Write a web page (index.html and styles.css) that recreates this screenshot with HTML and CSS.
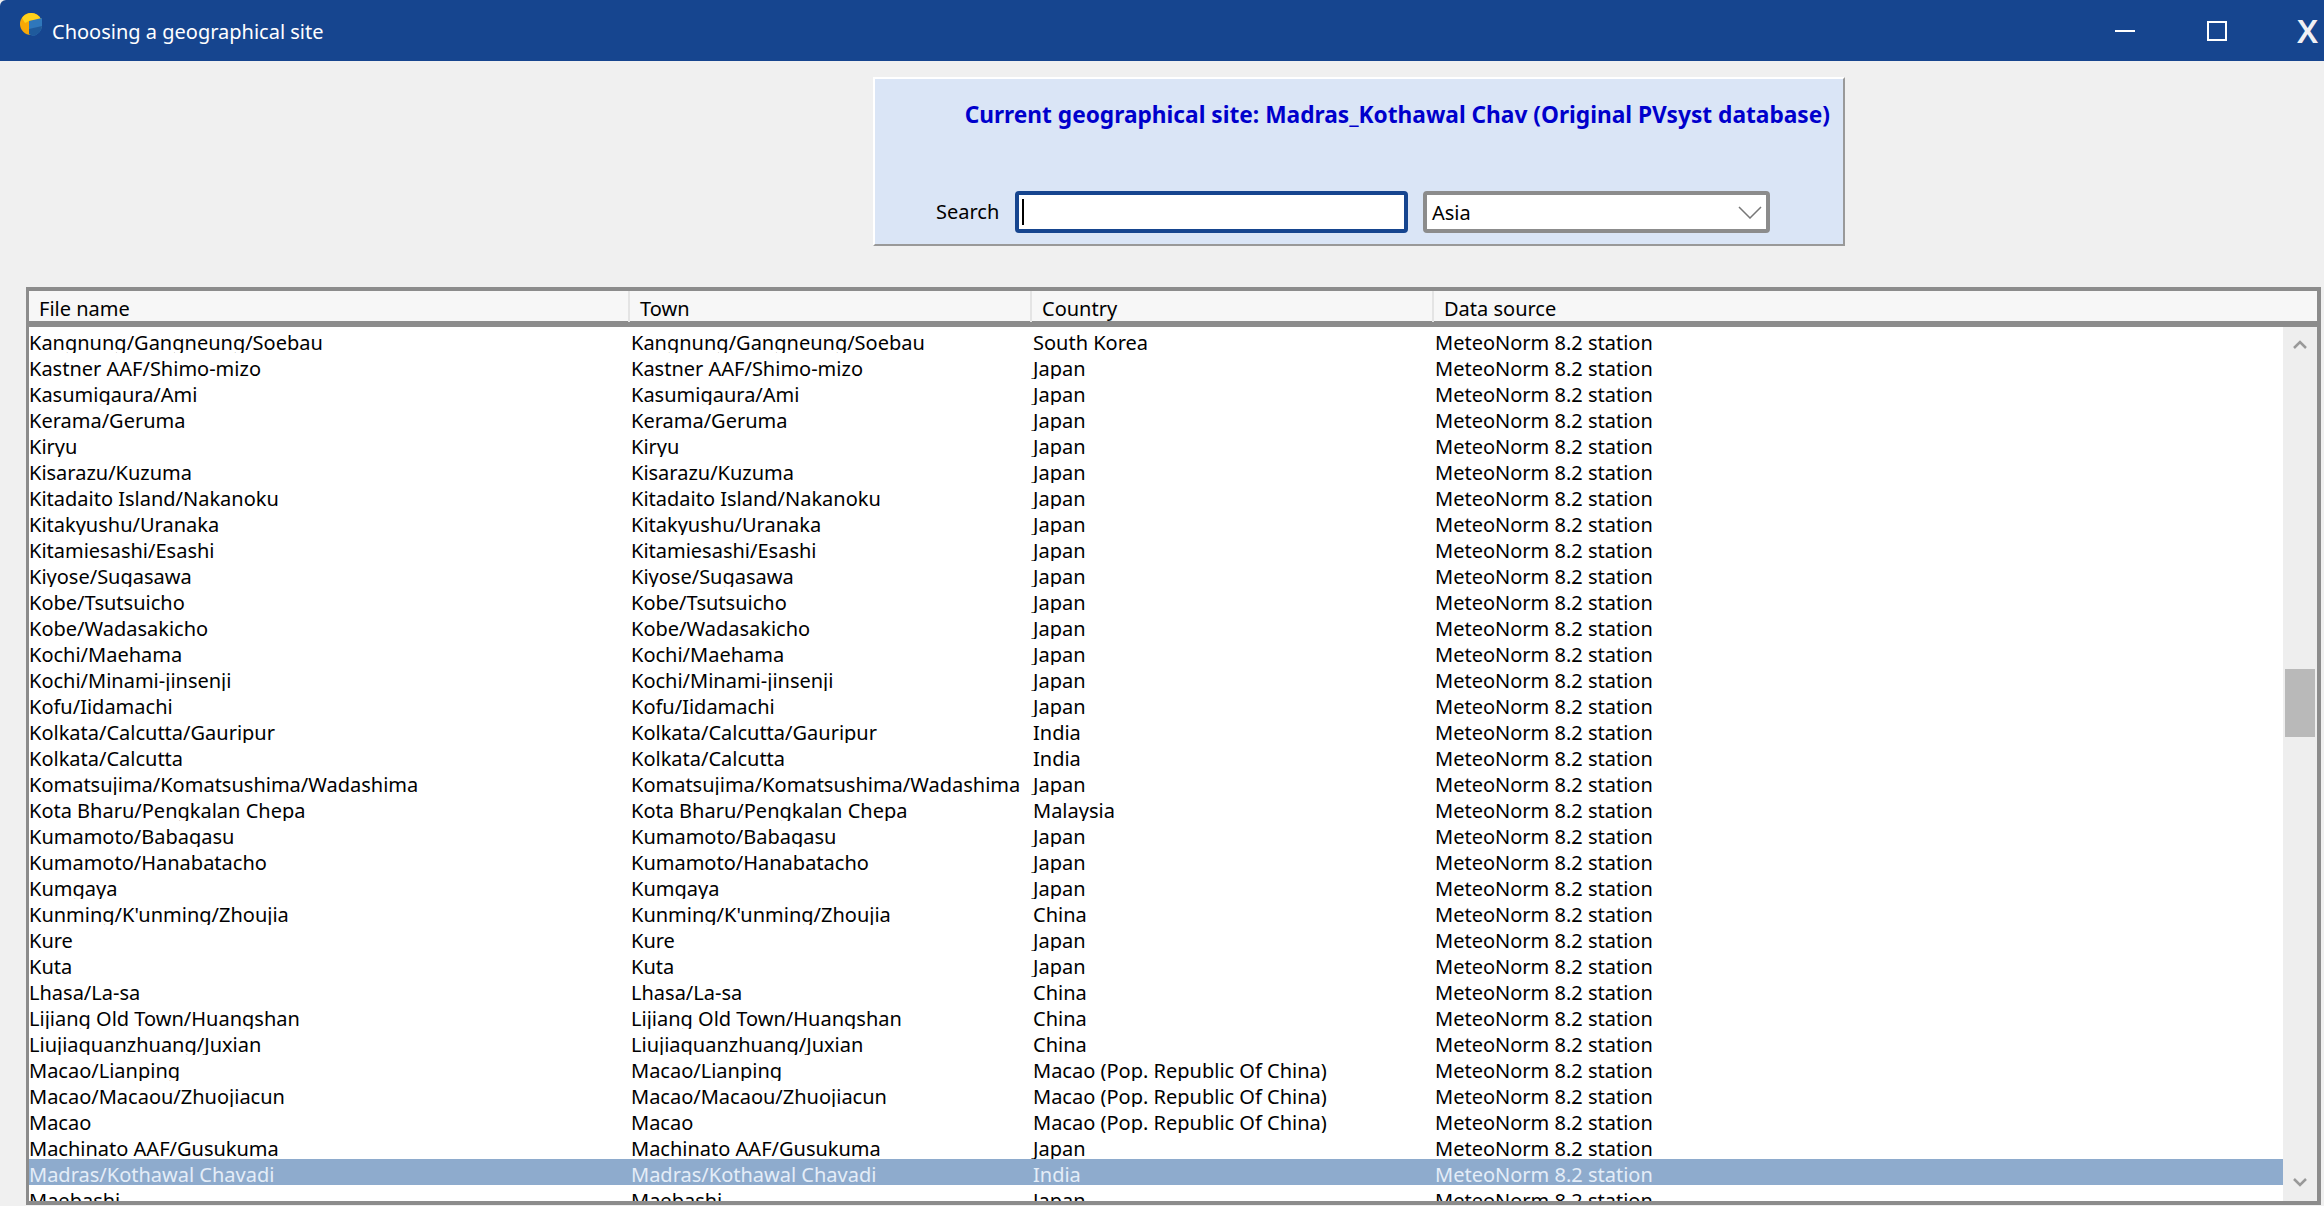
FILE: index.html
```html
<!DOCTYPE html>
<html>
<head>
    <title>Choosing a geographical site</title>
    <link rel="stylesheet" href="styles.css">
</head>
<body>
    <!-- window title bar -->
    <div class="titlebar">
        <svg class="app-icon" width="24" height="24" viewBox="0 0 24 24">
            <circle cx="12" cy="11" r="11" fill="#f8a806"/>
            <path d="M3 5a11 11 0 0 1 19 1l-12 2-4 2z" fill="#ffd21c"/>
            <path d="M10 8l13-3v8a11 11 0 0 1-9 10l-4-2z" fill="#2f77bb"/>
            <path d="M10 16l13-3a11 11 0 0 1-9 10l-4-2z" fill="#1f5a9c"/>
        </svg>
        <span class="title">Choosing a geographical site</span>
        <div class="controls">
            <span class="min"></span>
            <span class="max"></span>
            <span class="close">X</span>
        </div>
    </div>

    <div class="content">
        <!-- current site and search -->
        <div class="panel">
            <div class="current">Current geographical site: Madras_Kothawal Chav (Original PVsyst database)</div>
            <div class="search-row">
                <label class="search-label" for="search">Search</label>
                <div class="search-box" id="search"><span class="caret"></span></div>
                <div class="region">
                    <span>Asia</span>
                    <svg width="24" height="13" viewBox="0 0 24 13"><path d="M1 1l11 11L23 1" fill="none" stroke="#777" stroke-width="1.5"/></svg>
                </div>
            </div>
        </div>

        <!-- site list -->
        <div class="list">
            <div class="list-head">
                <div>File name</div>
                <div>Town</div>
                <div>Country</div>
                <div>Data source</div>
            </div>
            <div class="list-body">
                <div class="rows">
                    <div class="row"><span>Kangnung/Gangneung/Soebau</span><span>Kangnung/Gangneung/Soebau</span><span>South Korea</span><span>MeteoNorm 8.2 station</span></div>
                    <div class="row"><span>Kastner AAF/Shimo-mizo</span><span>Kastner AAF/Shimo-mizo</span><span>Japan</span><span>MeteoNorm 8.2 station</span></div>
                    <div class="row"><span>Kasumigaura/Ami</span><span>Kasumigaura/Ami</span><span>Japan</span><span>MeteoNorm 8.2 station</span></div>
                    <div class="row"><span>Kerama/Geruma</span><span>Kerama/Geruma</span><span>Japan</span><span>MeteoNorm 8.2 station</span></div>
                    <div class="row"><span>Kiryu</span><span>Kiryu</span><span>Japan</span><span>MeteoNorm 8.2 station</span></div>
                    <div class="row"><span>Kisarazu/Kuzuma</span><span>Kisarazu/Kuzuma</span><span>Japan</span><span>MeteoNorm 8.2 station</span></div>
                    <div class="row"><span>Kitadaito Island/Nakanoku</span><span>Kitadaito Island/Nakanoku</span><span>Japan</span><span>MeteoNorm 8.2 station</span></div>
                    <div class="row"><span>Kitakyushu/Uranaka</span><span>Kitakyushu/Uranaka</span><span>Japan</span><span>MeteoNorm 8.2 station</span></div>
                    <div class="row"><span>Kitamiesashi/Esashi</span><span>Kitamiesashi/Esashi</span><span>Japan</span><span>MeteoNorm 8.2 station</span></div>
                    <div class="row"><span>Kiyose/Sugasawa</span><span>Kiyose/Sugasawa</span><span>Japan</span><span>MeteoNorm 8.2 station</span></div>
                    <div class="row"><span>Kobe/Tsutsuicho</span><span>Kobe/Tsutsuicho</span><span>Japan</span><span>MeteoNorm 8.2 station</span></div>
                    <div class="row"><span>Kobe/Wadasakicho</span><span>Kobe/Wadasakicho</span><span>Japan</span><span>MeteoNorm 8.2 station</span></div>
                    <div class="row"><span>Kochi/Maehama</span><span>Kochi/Maehama</span><span>Japan</span><span>MeteoNorm 8.2 station</span></div>
                    <div class="row"><span>Kochi/Minami-jinsenji</span><span>Kochi/Minami-jinsenji</span><span>Japan</span><span>MeteoNorm 8.2 station</span></div>
                    <div class="row"><span>Kofu/Iidamachi</span><span>Kofu/Iidamachi</span><span>Japan</span><span>MeteoNorm 8.2 station</span></div>
                    <div class="row"><span>Kolkata/Calcutta/Gauripur</span><span>Kolkata/Calcutta/Gauripur</span><span>India</span><span>MeteoNorm 8.2 station</span></div>
                    <div class="row"><span>Kolkata/Calcutta</span><span>Kolkata/Calcutta</span><span>India</span><span>MeteoNorm 8.2 station</span></div>
                    <div class="row"><span>Komatsujima/Komatsushima/Wadashima</span><span>Komatsujima/Komatsushima/Wadashima</span><span>Japan</span><span>MeteoNorm 8.2 station</span></div>
                    <div class="row"><span>Kota Bharu/Pengkalan Chepa</span><span>Kota Bharu/Pengkalan Chepa</span><span>Malaysia</span><span>MeteoNorm 8.2 station</span></div>
                    <div class="row"><span>Kumamoto/Babagasu</span><span>Kumamoto/Babagasu</span><span>Japan</span><span>MeteoNorm 8.2 station</span></div>
                    <div class="row"><span>Kumamoto/Hanabatacho</span><span>Kumamoto/Hanabatacho</span><span>Japan</span><span>MeteoNorm 8.2 station</span></div>
                    <div class="row"><span>Kumgaya</span><span>Kumgaya</span><span>Japan</span><span>MeteoNorm 8.2 station</span></div>
                    <div class="row"><span>Kunming/K'unming/Zhoujia</span><span>Kunming/K'unming/Zhoujia</span><span>China</span><span>MeteoNorm 8.2 station</span></div>
                    <div class="row"><span>Kure</span><span>Kure</span><span>Japan</span><span>MeteoNorm 8.2 station</span></div>
                    <div class="row"><span>Kuta</span><span>Kuta</span><span>Japan</span><span>MeteoNorm 8.2 station</span></div>
                    <div class="row"><span>Lhasa/La-sa</span><span>Lhasa/La-sa</span><span>China</span><span>MeteoNorm 8.2 station</span></div>
                    <div class="row"><span>Lijiang Old Town/Huangshan</span><span>Lijiang Old Town/Huangshan</span><span>China</span><span>MeteoNorm 8.2 station</span></div>
                    <div class="row"><span>Liujiaquanzhuang/Juxian</span><span>Liujiaquanzhuang/Juxian</span><span>China</span><span>MeteoNorm 8.2 station</span></div>
                    <div class="row"><span>Macao/Lianping</span><span>Macao/Lianping</span><span>Macao (Pop. Republic Of China)</span><span>MeteoNorm 8.2 station</span></div>
                    <div class="row"><span>Macao/Macaou/Zhuojiacun</span><span>Macao/Macaou/Zhuojiacun</span><span>Macao (Pop. Republic Of China)</span><span>MeteoNorm 8.2 station</span></div>
                    <div class="row"><span>Macao</span><span>Macao</span><span>Macao (Pop. Republic Of China)</span><span>MeteoNorm 8.2 station</span></div>
                    <div class="row"><span>Machinato AAF/Gusukuma</span><span>Machinato AAF/Gusukuma</span><span>Japan</span><span>MeteoNorm 8.2 station</span></div>
                    <div class="row selected"><span>Madras/Kothawal Chavadi</span><span>Madras/Kothawal Chavadi</span><span>India</span><span>MeteoNorm 8.2 station</span></div>
                    <div class="row"><span>Maebashi</span><span>Maebashi</span><span>Japan</span><span>MeteoNorm 8.2 station</span></div>
                </div>
                <div class="scrollbar">
                    <svg width="14" height="9" viewBox="0 0 14 9"><path d="M1 8l6-6 6 6" fill="none" stroke="#999" stroke-width="2.5"/></svg>
                    <div class="thumb"></div>
                    <svg width="14" height="9" viewBox="0 0 14 9"><path d="M1 1l6 6 6-6" fill="none" stroke="#999" stroke-width="2.5"/></svg>
                </div>
            </div>
        </div>
    </div>
</body>
</html>
```

FILE: styles.css
```css
/* Window colors */
:root {
    --win-blue: #16458f;
    --win-back: #f0f0f0;
    --frame: #8c8c8c;
}

html, body {
    margin: 0;
    height: 100%;
    overflow: hidden;
}

body {
    font-family: "Noto Sans", sans-serif;
    font-size: 20px;
    background-color: var(--win-back);
    color: #000;
}

/* Title bar */
.titlebar {
    display: flex;
    align-items: center;
    height: 61px;
    padding-left: 19px;
    background-color: var(--win-blue);
    color: #fff;
    border-top-left-radius: 6px;
}

.app-icon {
    align-self: flex-start;
    margin-top: 13px;
}

.title {
    margin-left: 9px;
    font-size: 20px;
    padding-top: 1px;
}

.controls {
    display: flex;
    align-items: center;
    margin-left: auto;
    height: 100%;
}

.min {
    width: 20px;
    height: 2px;
    margin-right: 72px;
    background-color: #fff;
}

.max {
    width: 16px;
    height: 16px;
    margin-right: 70px;
    border: 2px solid #fff;
}

.close {
    width: 27px;
    font-size: 33px;
    font-weight: 600;
    line-height: 1;
    color: #f0f0f4;
}

/* Content */
.content {
    display: flex;
    flex-direction: column;
    padding: 16px 3px 0 26px;
}

.panel {
    align-self: flex-start;
    box-sizing: border-box;
    width: 972px;
    height: 169px;
    margin-left: 847px;
    padding: 0 13px 0 0;
    background-color: #dae5f6;
    border-top: 2px solid #fff;
    border-left: 2px solid #fff;
    border-right: 2px solid #999;
    border-bottom: 2px solid #999;
}

.current {
    margin-top: 22px;
    text-align: right;
    font-size: 22.7px;
    font-weight: 700;
    line-height: 28px;
    color: #0000cc;
    white-space: nowrap;
}

.search-row {
    display: flex;
    align-items: center;
    margin-top: 62px;
    padding-left: 61px;
}

.search-label {
    width: 79px;
    padding-bottom: 2px;
}

.search-box, .region {
    box-sizing: border-box;
    display: flex;
    align-items: center;
    height: 42px;
    background-color: #fff;
    border-radius: 4px;
}

.search-box {
    width: 393px;
    padding-left: 3px;
    border: 4px solid var(--win-blue);
}

.caret {
    width: 2px;
    height: 26px;
    background-color: #000;
}

.region {
    justify-content: space-between;
    width: 347px;
    margin-left: 15px;
    padding: 0 4px 0 5px;
    border: 4px solid var(--frame);
}

/* Site list */
.list {
    display: flex;
    flex-direction: column;
    box-sizing: border-box;
    height: 918px;
    margin-top: 41px;
    border: 4px solid var(--frame);
    border-left-width: 3px;
}

.list-head {
    display: grid;
    grid-template-columns: 601px 402px 402px 1fr;
    height: 30px;
    flex-shrink: 0;
    background-color: #f7f7f7;
    border-bottom: 6px solid var(--frame);
}

.list-head div {
    padding: 5px 0 0 10px;
    line-height: 26px;
    border-right: 2px solid #e4e4e4;
}

.list-head div:last-child {
    border-right: none;
}

.list-body {
    display: flex;
    flex: 1;
    min-height: 0;
    background-color: #fff;
}

.rows {
    flex: 1;
    min-width: 0;
    overflow: hidden;
}

/* next row paints over the descenders, same as the real list */
.row {
    display: grid;
    grid-template-columns: 602px 402px 402px 1fr;
    position: relative;
    height: 26px;
    padding-top: 3px;
    box-sizing: border-box;
    line-height: 26px;
    white-space: nowrap;
    background-color: #fff;
}

.selected {
    background-color: #8eabcd;
    color: #e4edf8;
}

.scrollbar {
    display: flex;
    flex-direction: column;
    align-items: center;
    justify-content: space-between;
    width: 34px;
    padding: 13px 0 14px;
    box-sizing: border-box;
    position: relative;
    background-color: #eee;
}

.thumb {
    position: absolute;
    top: 342px;
    left: 2px;
    width: 30px;
    height: 68px;
    background-color: #b9b9b9;
}
```
